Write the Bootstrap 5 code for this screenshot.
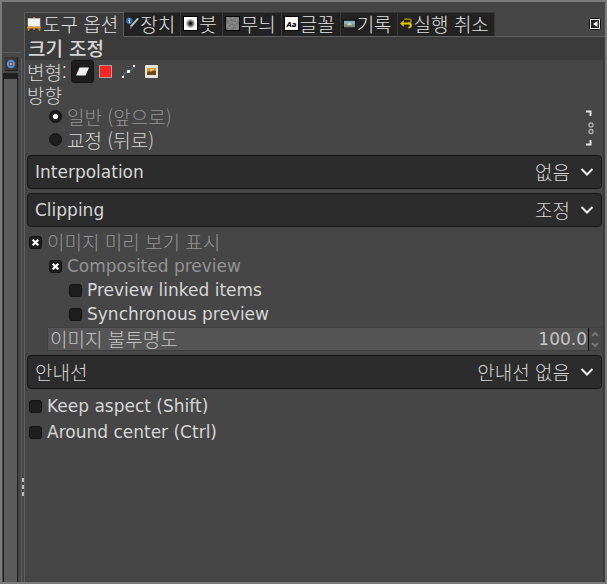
<!DOCTYPE html>
<html lang="ko">
<head>
<meta charset="utf-8">
<meta name="viewport" content="width=device-width, initial-scale=1">
<title>도구 옵션</title>
<link href="https://cdn.jsdelivr.net/npm/bootstrap@5.3.0/dist/css/bootstrap.min.css" rel="stylesheet">
<style>
  body { font-family: "DejaVu Sans", "Noto Sans CJK KR", sans-serif; font-size: 17px; line-height: 24px; color: #d6d6d6; background: #464646; }
  .ko { font-family: "Noto Sans CJK KR", sans-serif; font-size: 19px; font-weight: 300; line-height: 22px; }
  .window { border: 2px solid #7b7b7b; background: #464646; }
  .rail { width: 19px; padding-top: 50px; }
  .rail-head { height: 20px; border-top: 1px solid #5a5a5a; padding: 4px 2px 0 3px; }
  .rail-icon { width: 13px; height: 14px; background: #383838; border-right: 1px solid #202020; border-bottom: 1px solid #202020; }
  .rail-icon svg { width: 10px; height: 10px; }
  .rail-track { margin: 1px 3px 0 1px; background: #5b5b5b; border: 1px solid #202020; border-top-width: 6px; border-bottom: 0; }
  .grip { width: 3px; gap: 3px; margin-top: 56px; padding-bottom: 86px; border-left: 1px solid #606060; }
  .grip i { width: 2px; height: 4px; background: #bdbdbd; }
  .dock { min-width: 0; padding-top: 10px; }
  .tabs { height: 25px; }
  .tabs::after { content: ""; order: 1; flex: 1; border-bottom: 1px solid #606060; }
  .tab { height: 25px; padding: 0 5px 2px 2px; gap: 1px; border: 0; border-right: 1px solid #383838; border-bottom: 1px solid #606060; border-top: 1px solid #383838; background: #222; color: #e2e2e2; line-height: 22px; white-space: nowrap; }
  .tab.current { background: #3b3b3b; gap: 2px; border: 1px solid #606060; border-bottom-color: #3b3b3b; }
  .tab svg { width: 15px; height: 15px; flex: none; }
  .tab.current svg { width: 14px; height: 14px; }
  .tab svg.slim { width: 13px; height: 13px; }
  .menu { order: 2; width: 16px; border: 0; border-bottom: 1px solid #606060; background: none; }
  .menu svg { width: 12px; height: 12px; }
  .sheet { border-left: 1px solid #606060; border-right: 2px solid #3b3b3b; }
  .heading { height: 23px; padding-left: 3px; background: #3b3b3b; }
  .heading h1 { font-size: 19px; line-height: 24px; font-weight: 500; margin: 0; }
  .options { padding: 0 1px 0 2px; }
  .line { height: 23px; }
  .tool { width: 23px; height: 23px; padding: 0; border: 1px solid transparent; border-radius: 3px; background: none; color: inherit; }
  .tool.current { background: #1d1d1d; border-color: #151515; }
  .tool svg { width: 15px; height: 15px; }
  .dim { color: #939393; }
  .pick { height: 24px; padding-left: 2px; gap: 5px; }
  .pick .form-check-input { width: 13px; height: 13px; margin: 0; background-color: #1e1e1e; border: 1px solid #131313; flex: none; }
  .pick .form-check-input[type=checkbox] { border-radius: 3px; }
  .pick .form-check-input:checked[type=checkbox] { background-size: 11px 11px; background-image: url("data:image/svg+xml,%3Csvg xmlns='http://www.w3.org/2000/svg' viewBox='0 0 11 11'%3E%3Cpath d='M2.7 2.7l5.6 5.6M8.3 2.7L2.7 8.3' stroke='white' stroke-width='2.2'/%3E%3C/svg%3E"); }
  .pick .form-check-input:checked[type=radio] { background-size: 11px 11px; background-image: url("data:image/svg+xml,%3Csvg xmlns='http://www.w3.org/2000/svg' viewBox='0 0 11 11'%3E%3Ccircle cx='5.5' cy='5.5' r='2.6' fill='white'/%3E%3C/svg%3E"); }
  .in-1 { margin-left: 20px; }
  .in-2 { margin-left: 40px; }
  .direction legend { height: 22px; line-height: 24px; }
  .direction .pick { height: 23px; }
  .chain { width: 22px; height: 40px; }
  .combo { height: 34px; padding: 0 7px; background: #2c2c2c; border: 1px solid #161616; border-radius: 4px; }
  .combo select { min-width: 0; border: 0; background: none; color: inherit; appearance: none; text-align: right; text-align-last: right; padding: 0 10px 0 0; }
  .combo option { background: #2c2c2c; }
  .combo svg { width: 14px; height: 10px; flex: none; pointer-events: none; }
  .combos { gap: 4px; padding: 4px 0 3px; }
  .scale { margin: 1px 0 0 20px; height: 24px; background: #555; border: 1px solid #404040; color: #c4c4c4; }
  .scale label { padding-left: 2px; }
  .scale input { min-width: 0; border: 0; border-right: 1px solid #000; background: none; color: inherit; text-align: right; padding: 0 1px 0 0; appearance: textfield; }
  .scale input::-webkit-inner-spin-button { appearance: none; }
  .steps { width: 12px; background: #484848; }
  .steps button { height: 11px; padding: 0; border: 0; background: none; line-height: 0; }
  .steps svg { width: 8px; height: 6px; }
  .last { gap: 2px; padding-top: 2px; }
</style>
<script src="https://cdn.jsdelivr.net/npm/bootstrap@5.3.0/dist/js/bootstrap.bundle.min.js"></script>
</head>
<body>
<div class="window d-flex min-vh-100">
  <aside class="rail d-flex flex-column flex-shrink-0">
    <div class="rail-head"><div class="rail-icon d-flex align-items-center justify-content-center">
      <svg viewBox="0 0 10 10"><circle cx="5" cy="5" r="3.2" fill="#303c50" stroke="#6291cf" stroke-width="2"/><circle cx="5" cy="5" r="1.5" fill="#b7aaa0"/></svg>
    </div></div>
    <div class="rail-track flex-grow-1"></div>
  </aside>
  <div class="grip d-flex flex-column justify-content-end flex-shrink-0"><i></i><i></i><i></i></div>
  <main class="dock flex-grow-1 d-flex flex-column">
    <nav class="tabs d-flex" aria-label="대화 상자">
      <button class="tab current ko d-flex align-items-center" type="button">
        <svg viewBox="0 0 14 14"><path d="M3 10L1 13.5M11 10l2 3.5M7 9v4M7 0v3" stroke="#cc8420" stroke-width="1.6"/><rect x="1" y="1.5" width="12" height="8" fill="#f2f2ee" stroke="#c9c9c4" stroke-width=".6"/><path d="M0 10.5h14" stroke="#e29a2c" stroke-width="1.6"/></svg>도구 옵션</button>
      <button class="tab ko d-flex align-items-center" type="button">
        <svg class="slim" viewBox="0 0 14 14"><path d="M4 13l1-4 7-8 2 1-7 8z" fill="#b9c0bd"/><path d="M4 13l1-4 1.500 1.500z" fill="#666"/><circle cx="3.500" cy="4" r="3.500" fill="#3368ad"/><path d="M3.500 1.500v1.200M2.600 3.700h1v2.600h1" stroke="#fff" fill="none"/></svg>장치</button>
      <button class="tab ko d-flex align-items-center" type="button">
        <svg viewBox="0 0 15 15"><defs><radialGradient id="brush"><stop offset=".1"/><stop offset="1" stop-color="#fff"/></radialGradient></defs><path d="M0 0h15v15H0z"/><path d="M1 1h13v13H1z" fill="#fff"/><circle cx="7.500" cy="7.500" r="5" fill="url(#brush)"/></svg>붓</button>
      <button class="tab ko d-flex align-items-center" type="button">
        <svg viewBox="0 0 15 15"><path d="M0 0h15v15H0z"/><path d="M1 1h13v13H1z" fill="#7c7c7c"/><path d="M2 3h3M7 2h2M11 4h3M4 6h2M8 7h3M1 9h3M6 10h2M11 10h2M3 12h3M9 13h4" stroke="#999"/><path d="M5 4h3M1 5h2M9 5h2M6 8h2M12 7h2M4 10h1M8 12h3M1 13h2" stroke="#666"/></svg>무늬</button>
      <button class="tab ko d-flex align-items-center" type="button">
        <svg viewBox="0 0 15 15"><path d="M0 0h15v15H0z"/><path d="M1 1h13v13H1z" fill="#fff"/><text x="7.500" y="10.500" text-anchor="middle" font-family="DejaVu Sans" font-size="7" font-weight="bold" font-style="italic">Aa</text></svg>글꼴</button>
      <button class="tab ko d-flex align-items-center" type="button">
        <svg class="slim" viewBox="0 0 14 14"><path d="M0 3h14v9H0z"/><path d="M1 4h12v7H1z" fill="#83b2b9"/><path d="M1 8h12v3H1z" fill="#80867a"/><path d="M4 9l3-4 3 4z" fill="#d0c9b0"/></svg>기록</button>
      <button class="tab ko d-flex align-items-center" type="button">
        <svg class="slim" viewBox="0 0 14 14"><path d="M4.500 2.200h4.500c4 0 4 3.500 0 4" fill="none" stroke="#8d7b12" stroke-width="1.800"/><path d="M0 7l4-3.500v2.500h6c4 0 4 6.500-1 6.500v-2c2 0 2-2.500 0-2.500H4v2.500z" fill="#e3c411"/></svg>실행 취소</button>
      <button class="menu p-0 d-flex align-items-center" type="button" aria-label="탭 메뉴">
        <svg viewBox="0 0 12 12"><rect x=".5" y=".5" width="11" height="11" rx="1" fill="#eee" stroke="#111"/><path d="M2 2h8v8H2z" fill="#222"/><path d="M8.500 3v6L4 6z" fill="#fff"/></svg></button>
    </nav>
    <div class="sheet flex-grow-1">
      <div class="heading"><h1>크기 조정</h1></div>
      <form class="options">
        <div class="line d-flex align-items-center">
          <span class="ko">변형:</span>
          <button class="tool current ms-1" type="button" aria-label="레이어"><svg class="d-block m-auto" viewBox="0 0 15 15"><path d="M4.500 3.500H14L10.500 11.500H1z" fill="#f0f0f0"/></svg></button>
          <button class="tool" type="button" aria-label="선택 영역"><svg class="d-block m-auto" viewBox="0 0 15 15"><rect x="1.500" y="1.500" width="12" height="12" fill="#f22727" stroke="#eee" stroke-dasharray="1 1"/></svg></button>
          <button class="tool" type="button" aria-label="경로"><svg class="d-block m-auto" viewBox="0 0 15 15"><path d="M2 13q1-5 6-5.500Q12 6 13 2" fill="none" stroke="#5c83aa"/><path d="M1 12h2v2H1zM6 6h3v3H6zM12 1h2v2h-2z" fill="#fff"/></svg></button>
          <button class="tool" type="button" aria-label="이미지"><svg class="d-block m-auto" viewBox="0 0 15 15"><rect x="1" y="1" width="13" height="13" rx="1" fill="#e5e5df"/><path d="M3 4h9v7H3z" fill="#d89a3a"/><path d="M3 8l2-1 2 1 2-2 3 1v4H3z" fill="#6d461a"/><path d="M6 5h4v1.500H6z" fill="#f6d577"/></svg></button>
        </div>
        <fieldset class="direction">
          <legend class="line ko m-0">방향</legend>
          <div class="d-flex align-items-center justify-content-between">
            <div>
              <div class="pick in-1 d-flex align-items-center"><input class="form-check-input" type="radio" name="dir" id="fwd" checked><label class="ko dim" for="fwd">일반 (앞으로)</label></div>
              <div class="pick in-1 d-flex align-items-center"><input class="form-check-input" type="radio" name="dir" id="back"><label class="ko" for="back">교정 (뒤로)</label></div>
            </div>
            <svg class="chain" viewBox="0 0 22 40"><path d="M6 3.500h4.500V8M6 36.500h4.500V32" fill="none" stroke="#e6e6e6" stroke-width="2"/><g fill="none" stroke="#aaa" stroke-width="1.500"><circle cx="11" cy="17" r="2"/><circle cx="11" cy="23.500" r="2"/></g></svg>
          </div>
        </fieldset>
        <div class="combos d-flex flex-column">
          <div class="combo d-flex align-items-center"><label for="interp">Interpolation</label><select class="ko flex-grow-1" id="interp"><option>없음</option></select><svg viewBox="0 0 14 10"><path d="M1.500 2L7 7.500 12.500 2" fill="none" stroke="#eee" stroke-width="2"/></svg></div>
          <div class="combo d-flex align-items-center"><label for="clip">Clipping</label><select class="ko flex-grow-1" id="clip"><option>조정</option></select><svg viewBox="0 0 14 10"><path d="M1.500 2L7 7.500 12.500 2" fill="none" stroke="#eee" stroke-width="2"/></svg></div>
        </div>
        <div class="pick d-flex align-items-center"><input class="form-check-input" type="checkbox" id="show" checked><label class="ko dim" for="show">이미지 미리 보기 표시</label></div>
        <div class="pick in-1 d-flex align-items-center"><input class="form-check-input" type="checkbox" id="comp" checked><label class="dim" for="comp">Composited preview</label></div>
        <div class="pick in-2 d-flex align-items-center"><input class="form-check-input" type="checkbox" id="linked"><label for="linked">Preview linked items</label></div>
        <div class="pick in-2 d-flex align-items-center"><input class="form-check-input" type="checkbox" id="sync"><label for="sync">Synchronous preview</label></div>
        <div class="scale d-flex align-items-center">
          <label class="ko" for="opacity">이미지 불투명도</label>
          <input class="flex-grow-1 h-100" type="number" id="opacity" value="100.0" step="0.1">
          <div class="steps h-100 d-flex flex-column">
            <button type="button" aria-label="늘리기"><svg viewBox="0 0 8 6"><path d="M1 5l3-3 3 3" fill="none" stroke="#777" stroke-width="2"/></svg></button>
            <button type="button" aria-label="줄이기"><svg viewBox="0 0 8 6"><path d="M1 1l3 3 3-3" fill="none" stroke="#777" stroke-width="2"/></svg></button>
          </div>
        </div>
        <div class="combos d-flex flex-column">
          <div class="combo d-flex align-items-center"><label class="ko" for="guide">안내선</label><select class="ko flex-grow-1" id="guide"><option>안내선 없음</option></select><svg viewBox="0 0 14 10"><path d="M1.500 2L7 7.500 12.500 2" fill="none" stroke="#eee" stroke-width="2"/></svg></div>
        </div>
        <div class="last d-flex flex-column">
          <div class="pick d-flex align-items-center"><input class="form-check-input" type="checkbox" id="keep"><label for="keep">Keep aspect (Shift)</label></div>
          <div class="pick d-flex align-items-center"><input class="form-check-input" type="checkbox" id="center"><label for="center">Around center (Ctrl)</label></div>
        </div>
      </form>
    </div>
  </main>
</div>
</body>
</html>
